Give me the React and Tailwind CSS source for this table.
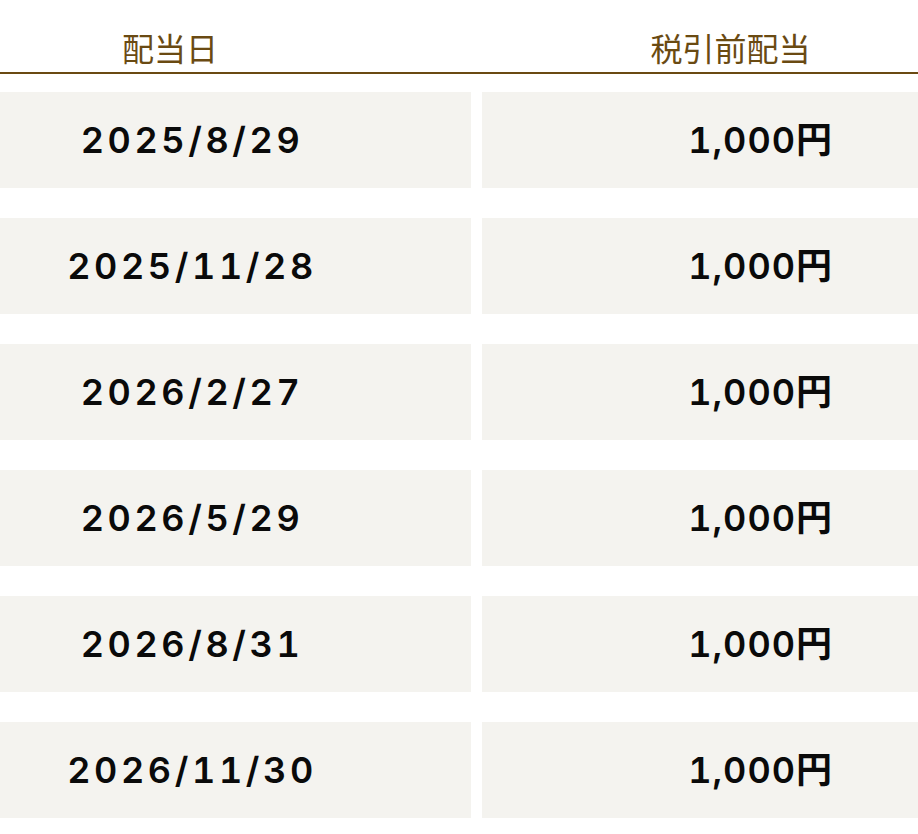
const dividends = [
  { date: "2025/8/29", amount: "1,000円" },
  { date: "2025/11/28", amount: "1,000円" },
  { date: "2026/2/27", amount: "1,000円" },
  { date: "2026/5/29", amount: "1,000円" },
  { date: "2026/8/31", amount: "1,000円" },
  { date: "2026/11/30", amount: "1,000円" },
];

const App = () => {
  return (
    <div className="w-[918px] h-[834px] bg-white overflow-hidden font-['Inter','Noto_Sans_CJK_JP',sans-serif]">
      {/* table header */}
      <div className="grid grid-cols-[471px_1fr] gap-x-[11px] h-[74px] pt-[22px] border-b-2 border-[#6a4a12] text-[#6a4a12] text-[32px] leading-[50px] font-['Noto_Sans_CJK_JP',sans-serif]">
        <div className="pr-[131px] text-center">配当日</div>
        <div className="pl-[61px] text-center">税引前配当</div>
      </div>

      {/* rows */}
      <div className="grid grid-cols-[471px_1fr] gap-x-[11px] gap-y-[30px] mt-[18px]">
        {dividends.map((row, index) => (
          <div key={index} className="contents">
            <div className="h-[96px] bg-[#f4f3ef] flex items-center justify-center pr-[91px] pl-[4px] text-[36px] font-semibold tabular-nums tracking-[3.6px] text-[#0a0a0a]">
              {row.date}
            </div>
            <div className="h-[96px] bg-[#f4f3ef] flex items-center justify-end pr-[85px] text-[36px] font-semibold tabular-nums tracking-[1px] text-[#0a0a0a]">
              {row.amount}
            </div>
          </div>
        ))}
      </div>
    </div>
  );
};

export default App;
